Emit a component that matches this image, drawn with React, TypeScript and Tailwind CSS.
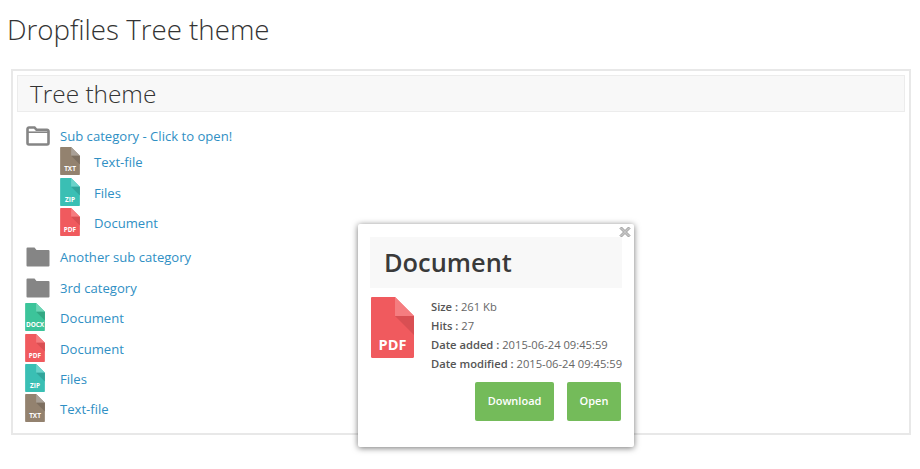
function FileIcon({
    label,
    color,
    fold,
    shade,
    className,
    labelSize = 14,
}: {
    label: string;
    color: string;
    fold: string;
    shade: string;
    className: string;
    labelSize?: number;
}) {
    return (
        <svg viewBox="0 0 43 61" className={className}>
            <path d="M1 0H24L43 19V59.500a1.500 1.500 0 0 1-1.500 1.500H1.500a1.500 1.500 0 0 1-1.500-1.500V1a1 1 0 0 1 1-1Z" fill={color} />
            <path d="M24 0L43 19H24Z" fill={fold} />
            <path d="M24 19H43V38Z" fill={shade} />
            <text
                x="21.5"
                y="53"
                textAnchor="middle"
                fill="#fff"
                fontWeight="700"
                fontSize={labelSize}
                fontFamily="'Open Sans', sans-serif"
            >
                {label}
            </text>
        </svg>
    );
}

function OpenFolder() {
    return (
        <svg viewBox="0 0 24 20" className="h-5 w-6 shrink-0">
            <path
                d="M3 1.500H8.500L10.500 3.800H21a1.500 1.500 0 0 1 1.500 1.500V17a1.500 1.500 0 0 1-1.500 1.500H3A1.500 1.500 0 0 1 1.500 17V3A1.500 1.500 0 0 1 3 1.500Z"
                fill="none"
                stroke="#858585"
                strokeWidth="2.600"
            />
            <path d="M1.500 6.200H22.500" stroke="#858585" strokeWidth="1.600" />
        </svg>
    );
}

function ClosedFolder() {
    return (
        <svg viewBox="0 0 24 20" className="h-5 w-6 shrink-0">
            <path
                d="M2 .5H8.500L10.500 3H22.500a1 1 0 0 1 1 1V18.500a1 1 0 0 1-1 1H1.500a1 1 0 0 1-1-1V1.500a1 1 0 0 1 1-1Z"
                fill="#858585"
            />
        </svg>
    );
}

const txt = { label: "TXT", color: "#93826f", fold: "#a9a097", shade: "#7d6f60" };
const zip = { label: "ZIP", color: "#3abfb4", fold: "#6ad3ca", shade: "#31a59b" };
const pdf = { label: "PDF", color: "#f05a5e", fold: "#f57d80", shade: "#d94f53" };
const docx = { label: "DOCX", color: "#3cc49a", fold: "#6dd5b5", shade: "#33a883" };

const linkClass = "text-[13.1px] leading-5 text-[#2f8fc4]";

function FileRow({ type, name, gap }: { type: typeof txt; name: string; gap: string }) {
    return (
        <div className={`flex h-[30.4px] items-center ${gap}`}>
            <FileIcon {...type} className="mb-[2px] h-7 w-5 shrink-0" />
            <span className={linkClass}>{name}</span>
        </div>
    );
}

function CloseIcon() {
    return (
        <svg viewBox="0 0 12 12" className="absolute right-[3px] top-[2px] h-3 w-3">
            <path
                d="M1 2.500 2.500 1 6 4.500 9.500 1 11 2.500 7.500 6 11 9.500 9.500 11 6 7.500 2.500 11 1 9.500 4.500 6Z"
                fill="#c4c4c4"
                stroke="#9d9d9d"
                strokeWidth="1"
            />
        </svg>
    );
}

export default function App() {
    return (
        <div className="relative h-[469px] w-[920px] overflow-hidden bg-white font-['Open_Sans',sans-serif]">
            <h1 className="pl-[7px] pt-[10px] text-[27.7px] leading-[38px] font-light text-[#333]">
                Dropfiles Tree theme
            </h1>

            {/* TREE BOX */}
            <div className="mx-[11px] mt-[21px] h-[366px] w-[900px] border-2 border-[#e8e8e8] p-1">
                <div className="h-[37px] border border-[#ececec] bg-[#f8f8f8] pl-3 text-[24.4px] leading-[36px] font-light text-[#333]">
                    Tree theme
                </div>

                <div className="mt-[14px] pl-[9px]">
                    <div className="flex h-[20px] items-center gap-[10px]">
                        <OpenFolder />
                        <span className={linkClass}>Sub category - Click to open!</span>
                    </div>
                    <div className="mt-px pl-[34px]">
                        <FileRow type={txt} name="Text-file" gap="gap-[14px]" />
                        <FileRow type={zip} name="Files" gap="gap-[14px]" />
                        <FileRow type={pdf} name="Document" gap="gap-[14px]" />
                    </div>
                    <div className="mt-[4px] flex h-[30.4px] items-center gap-[10px]">
                        <ClosedFolder />
                        <span className={linkClass}>Another sub category</span>
                    </div>
                    <div className="flex h-[30.4px] items-center gap-[10px]">
                        <ClosedFolder />
                        <span className={linkClass}>3rd category</span>
                    </div>
                    <div className="-ml-px">
                        <FileRow type={docx} name="Document" gap="gap-[15px]" />
                        <FileRow type={pdf} name="Document" gap="gap-[15px]" />
                        <FileRow type={zip} name="Files" gap="gap-[15px]" />
                        <FileRow type={txt} name="Text-file" gap="gap-[15px]" />
                    </div>
                </div>
            </div>

            {/* POPUP */}
            <div className="absolute left-[358px] top-[224px] h-[223px] w-[276px] rounded-[2px] bg-white pl-3 pr-[13px] pt-[13px] shadow-[0_1px_6px_rgba(0,0,0,0.55)]">
                <CloseIcon />
                <div className="h-[51px] w-[252px] bg-[#f8f8f8] pl-[14px] text-[25.4px] leading-[51px] font-semibold text-[#3a3a3a]">
                    Document
                </div>
                <div className="mt-[9px] flex pl-px">
                    <FileIcon {...pdf} labelSize={14.5} className="h-[61px] w-[43px] shrink-0" />
                    <div className="ml-[17px] whitespace-nowrap text-[11.2px] leading-[19px] text-[#666]">
                        <p><span className="font-semibold text-[#555]">Size : </span>261 Kb</p>
                        <p><span className="font-semibold text-[#555]">Hits : </span>27</p>
                        <p><span className="font-semibold text-[#555]">Date added : </span>2015-06-24 09:45:59</p>
                        <p><span className="font-semibold text-[#555]">Date modified : </span>2015-06-24 09:45:59</p>
                    </div>
                </div>
                <div className="mt-[9px] flex justify-end gap-[13px]">
                    <button className="h-[39px] w-[79px] rounded-[2px] bg-[#74bb5a] text-[11px] font-semibold text-white">
                        Download
                    </button>
                    <button className="h-[39px] w-[54px] rounded-[2px] bg-[#74bb5a] text-[11px] font-semibold text-white">
                        Open
                    </button>
                </div>
            </div>
        </div>
    );
}
